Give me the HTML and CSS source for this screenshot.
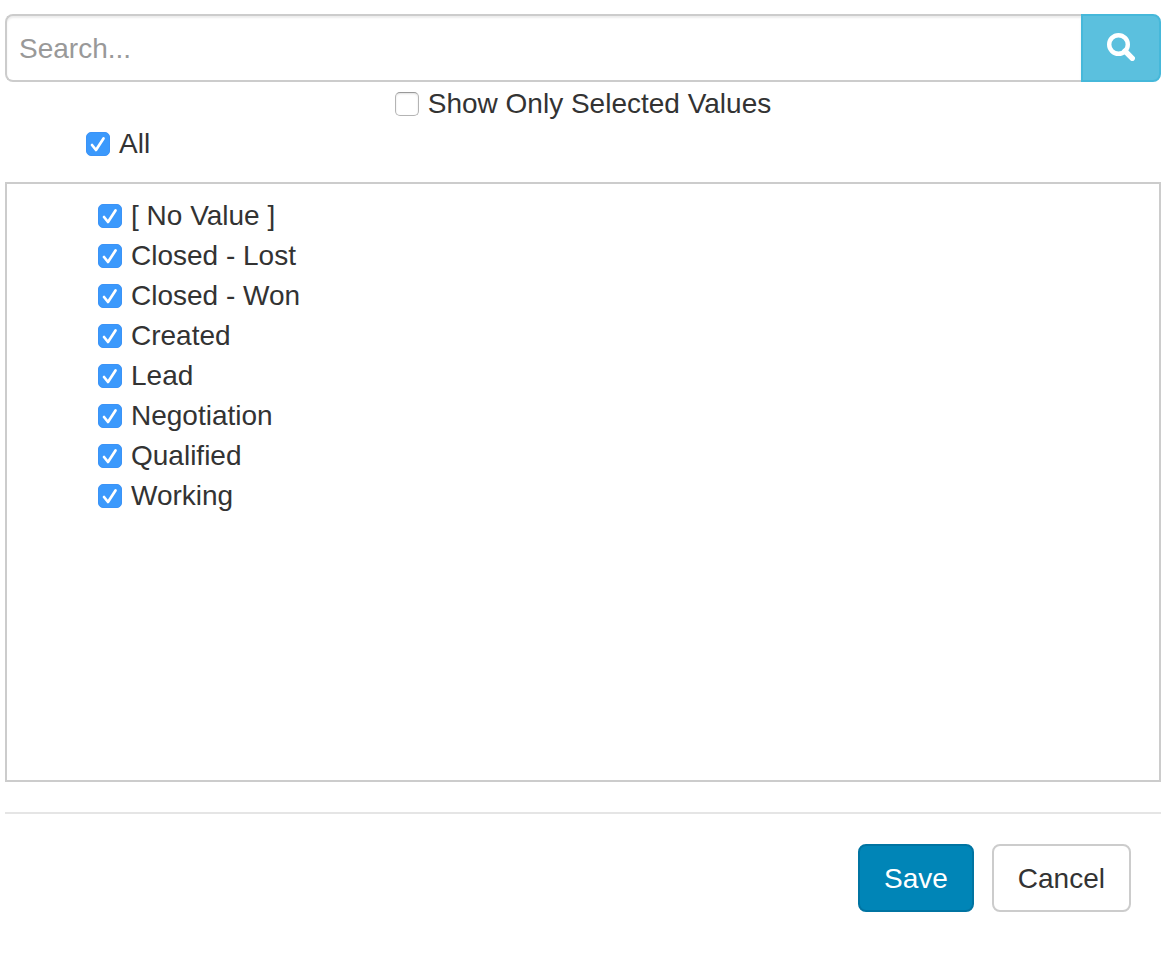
FILE: index.html
```html
<!DOCTYPE html>
<html lang="en">

<head>
    <meta charset="utf-8">
    <title>Select Values</title>
    <link rel="stylesheet" href="styles.css">
</head>

<body>
    <form class="filter">
        <div class="search">
            <input type="text" class="search-input" name="search" placeholder="Search..." aria-label="Search">
            <button type="button" class="search-button" aria-label="Search">
                <svg width="28" height="28" viewBox="0 0 28 28" fill="none" stroke="#fff">
                    <circle cx="11.5" cy="11.500" r="9.3" stroke-width="4.4" />
                    <path d="M18 18L25.300 25.300" stroke-width="5.4" stroke-linecap="round" />
                </svg>
            </button>
        </div>

        <label class="option only-selected"><input type="checkbox" name="onlySelected">Show Only Selected Values</label>
        <label class="option all"><input type="checkbox" name="all" checked>All</label>

        <div class="values">
            <label class="option"><input type="checkbox" name="value" checked>[ No Value ]</label>
            <label class="option"><input type="checkbox" name="value" checked>Closed - Lost</label>
            <label class="option"><input type="checkbox" name="value" checked>Closed - Won</label>
            <label class="option"><input type="checkbox" name="value" checked>Created</label>
            <label class="option"><input type="checkbox" name="value" checked>Lead</label>
            <label class="option"><input type="checkbox" name="value" checked>Negotiation</label>
            <label class="option"><input type="checkbox" name="value" checked>Qualified</label>
            <label class="option"><input type="checkbox" name="value" checked>Working</label>
        </div>

        <div class="footer">
            <button type="submit" class="btn btn-save">Save</button>
            <button type="button" class="btn btn-cancel">Cancel</button>
        </div>
    </form>
</body>

</html>
```
FILE: styles.css
```css
* {
    box-sizing: border-box;
}

body {
    margin: 0;
    padding: 14px 13px 14px 5px;
    background-color: #fff;
    color: #333;
    font-family: "Liberation Sans", Arial, sans-serif;
    font-size: 28px;
    line-height: 40px;
}

input,
button {
    margin: 0;
    font: inherit;
}

.filter {
    display: flex;
    flex-direction: column;
}

.search {
    display: flex;
    margin-bottom: 2px;
}

.search-input {
    flex: 1;
    min-width: 0;
    padding: 13px 12px 11px;
    border: 2px solid #ccc;
    border-right: none;
    border-radius: 8px 0 0 8px;
    box-shadow: inset 0 2px 2px rgba(0, 0, 0, 0.075);
    color: #555;
}

.search-input::placeholder {
    color: #999;
    opacity: 1;
}

.search-button {
    display: flex;
    align-items: center;
    padding: 0 24px 2px;
    border: 2px solid #46b8da;
    border-radius: 0 8px 8px 0;
    background-color: #5bc0de;
    cursor: pointer;
}

.option {
    display: flex;
    align-items: center;
    gap: 9px;
    width: fit-content;
}

.option input {
    appearance: none;
    width: 24px;
    height: 24px;
    border: 1px solid #b4b4b4;
    border-top-color: #999;
    border-radius: 5px;
    background-color: #fff;
    box-shadow: inset 0 1px 2px rgba(0, 0, 0, 0.12);
}

.option input:checked {
    border-color: #3b93f7;
    background: #3b99fc url("data:image/svg+xml,%3Csvg xmlns='http://www.w3.org/2000/svg' viewBox='0 0 24 24'%3E%3Cpath d='M6 13L10 18L17.500 6.500' fill='none' stroke='%23fff' stroke-width='2.700' stroke-linecap='round' stroke-linejoin='round'/%3E%3C/svg%3E") center / 24px 24px no-repeat;
    box-shadow: none;
}

.only-selected {
    align-self: center;
}

.all {
    margin-left: 81px;
}

.values {
    min-height: 600px;
    margin-top: 18px;
    padding: 12px 0 12px 91px;
    border: 2px solid #ccc;
}

.footer {
    display: flex;
    justify-content: flex-end;
    gap: 18px;
    margin-top: 30px;
    padding: 30px;
    border-top: 2px solid #e5e5e5;
}

.btn {
    padding: 13px 24px 11px;
    border: 2px solid #ccc;
    border-radius: 8px;
    background-color: #fff;
    color: #333;
    cursor: pointer;
}

.btn-save {
    border-color: #0074a2;
    background-color: #0085b7;
    color: #fff;
}
```
